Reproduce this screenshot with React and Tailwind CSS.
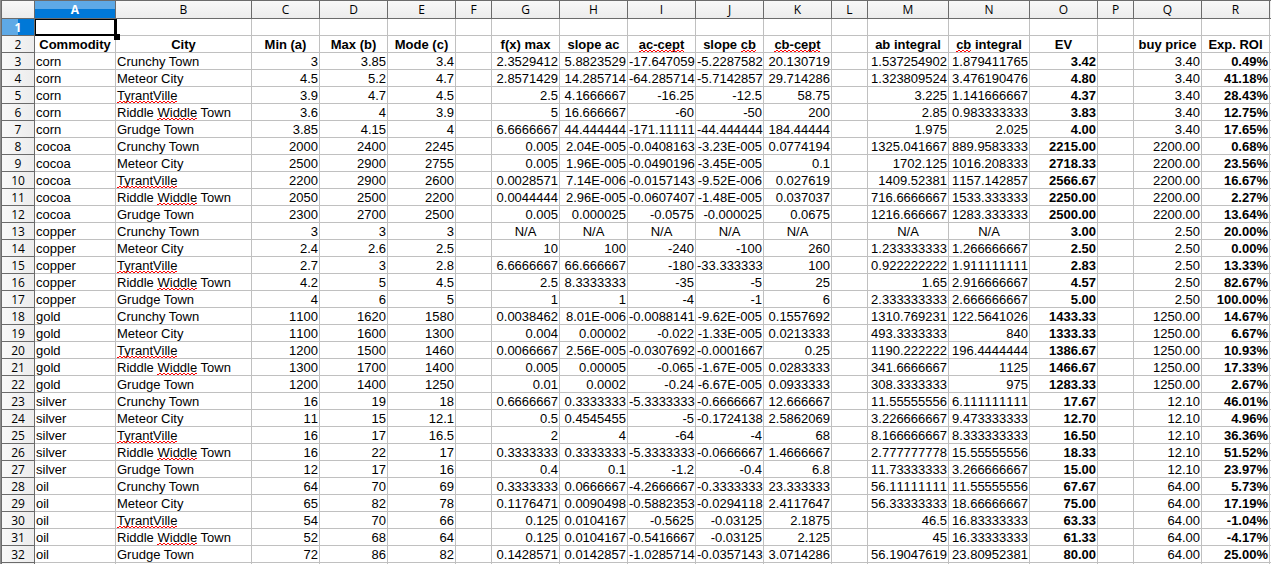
import React from 'react';
import clsx from 'clsx';

const COLUMNS = [
  { id: 'A', width: 'w-[81px]', title: 'Commodity', align: 'text-left' },
  { id: 'B', width: 'w-[136px]', title: 'City', align: 'text-left' },
  { id: 'C', width: 'w-[68px]', title: 'Min (a)' },
  { id: 'D', width: 'w-[68px]', title: 'Max (b)' },
  { id: 'E', width: 'w-[68px]', title: 'Mode (c)' },
  { id: 'F', width: 'w-[36px]', title: '' },
  { id: 'G', width: 'w-[68px]', title: 'f(x) max' },
  { id: 'H', width: 'w-[68px]', title: 'slope ac' },
  { id: 'I', width: 'w-[68px]', title: 'ac-cept' },
  { id: 'J', width: 'w-[68px]', title: 'slope cb' },
  { id: 'K', width: 'w-[68px]', title: 'cb-cept' },
  { id: 'L', width: 'w-[36px]', title: '' },
  { id: 'M', width: 'w-[81px]', title: 'ab integral' },
  { id: 'N', width: 'w-[81px]', title: 'cb integral' },
  { id: 'O', width: 'w-[68px]', title: 'EV', bold: true },
  { id: 'P', width: 'w-[36px]', title: '' },
  { id: 'Q', width: 'w-[68px]', title: 'buy price' },
  { id: 'R', width: 'w-[68px]', title: 'Exp. ROI', bold: true },
];

const CITIES = [
  'Crunchy Town',
  'Meteor City',
  'TyrantVille',
  'Riddle Widdle Town',
  'Grudge Town',
];

// Per commodity, one line per city:
// min max mode | f(x)max slope-ac ac-cept slope-cb cb-cept | ab cb | EV | ROI
const GOODS = [
  {
    name: 'corn',
    price: '3.40',
    lines: [
      '3 3.85 3.4 2.3529412 5.8823529 -17.647059 -5.2287582 20.130719 1.537254902 1.879411765 3.42 0.49%',
      '4.5 5.2 4.7 2.8571429 14.285714 -64.285714 -5.7142857 29.714286 1.323809524 3.476190476 4.80 41.18%',
      '3.9 4.7 4.5 2.5 4.1666667 -16.25 -12.5 58.75 3.225 1.141666667 4.37 28.43%',
      '3.6 4 3.9 5 16.666667 -60 -50 200 2.85 0.983333333 3.83 12.75%',
      '3.85 4.15 4 6.6666667 44.444444 -171.11111 -44.444444 184.44444 1.975 2.025 4.00 17.65%',
    ],
  },
  {
    name: 'cocoa',
    price: '2200.00',
    lines: [
      '2000 2400 2245 0.005 2.04E-005 -0.0408163 -3.23E-005 0.0774194 1325.041667 889.9583333 2215.00 0.68%',
      '2500 2900 2755 0.005 1.96E-005 -0.0490196 -3.45E-005 0.1 1702.125 1016.208333 2718.33 23.56%',
      '2200 2900 2600 0.0028571 7.14E-006 -0.0157143 -9.52E-006 0.027619 1409.52381 1157.142857 2566.67 16.67%',
      '2050 2500 2200 0.0044444 2.96E-005 -0.0607407 -1.48E-005 0.037037 716.6666667 1533.333333 2250.00 2.27%',
      '2300 2700 2500 0.005 0.000025 -0.0575 -0.000025 0.0675 1216.666667 1283.333333 2500.00 13.64%',
    ],
  },
  {
    name: 'copper',
    price: '2.50',
    lines: [
      '3 3 3 N/A N/A N/A N/A N/A N/A N/A 3.00 20.00%',
      '2.4 2.6 2.5 10 100 -240 -100 260 1.233333333 1.266666667 2.50 0.00%',
      '2.7 3 2.8 6.6666667 66.666667 -180 -33.333333 100 0.922222222 1.911111111 2.83 13.33%',
      '4.2 5 4.5 2.5 8.3333333 -35 -5 25 1.65 2.916666667 4.57 82.67%',
      '4 6 5 1 1 -4 -1 6 2.333333333 2.666666667 5.00 100.00%',
    ],
  },
  {
    name: 'gold',
    price: '1250.00',
    lines: [
      '1100 1620 1580 0.0038462 8.01E-006 -0.0088141 -9.62E-005 0.1557692 1310.769231 122.5641026 1433.33 14.67%',
      '1100 1600 1300 0.004 0.00002 -0.022 -1.33E-005 0.0213333 493.3333333 840 1333.33 6.67%',
      '1200 1500 1460 0.0066667 2.56E-005 -0.0307692 -0.0001667 0.25 1190.222222 196.4444444 1386.67 10.93%',
      '1300 1700 1400 0.005 0.00005 -0.065 -1.67E-005 0.0283333 341.6666667 1125 1466.67 17.33%',
      '1200 1400 1250 0.01 0.0002 -0.24 -6.67E-005 0.0933333 308.3333333 975 1283.33 2.67%',
    ],
  },
  {
    name: 'silver',
    price: '12.10',
    lines: [
      '16 19 18 0.6666667 0.3333333 -5.3333333 -0.6666667 12.666667 11.55555556 6.111111111 17.67 46.01%',
      '11 15 12.1 0.5 0.4545455 -5 -0.1724138 2.5862069 3.226666667 9.473333333 12.70 4.96%',
      '16 17 16.5 2 4 -64 -4 68 8.166666667 8.333333333 16.50 36.36%',
      '16 22 17 0.3333333 0.3333333 -5.3333333 -0.0666667 1.4666667 2.777777778 15.55555556 18.33 51.52%',
      '12 17 16 0.4 0.1 -1.2 -0.4 6.8 11.73333333 3.266666667 15.00 23.97%',
    ],
  },
  {
    name: 'oil',
    price: '64.00',
    lines: [
      '64 70 69 0.3333333 0.0666667 -4.2666667 -0.3333333 23.333333 56.11111111 11.55555556 67.67 5.73%',
      '65 82 78 0.1176471 0.0090498 -0.5882353 -0.0294118 2.4117647 56.33333333 18.66666667 75.00 17.19%',
      '54 70 66 0.125 0.0104167 -0.5625 -0.03125 2.1875 46.5 16.83333333 63.33 -1.04%',
      '52 68 64 0.125 0.0104167 -0.5416667 -0.03125 2.125 45 16.33333333 61.33 -4.17%',
      '72 86 82 0.1428571 0.0142857 -1.0285714 -0.0357143 3.0714286 56.19047619 23.80952381 80.00 25.00%',
    ],
  },
];

const ROWS = GOODS.flatMap(({ name, price, lines }) =>
  lines.map((line, i) => {
    const v = line.split(' ');
    return [
      name,
      CITIES[i],
      ...v.slice(0, 3),
      '',
      ...v.slice(3, 8),
      '',
      ...v.slice(8, 11),
      '',
      price,
      v[11],
    ];
  })
);

// words the spell checker does not know
const UNKNOWN = /(TyrantVille|Widdle|ac-cept|cb-cept|\bcb\b)/;

function Misspelled({ children }) {
  return (
    <span className="relative inline-block">
      {children}
      <svg
        className="absolute left-0 bottom-0 w-full h-[2px]"
        shapeRendering="crispEdges"
        aria-hidden="true"
      >
        <defs>
          <pattern
            id="squiggle"
            width="4"
            height="2"
            patternUnits="userSpaceOnUse"
          >
            <path d="M0 1h2v1h-2zM2 0h2v1h-2z" fill="#ff0000" />
          </pattern>
        </defs>
        <rect width="100%" height="2" fill="url(#squiggle)" />
      </svg>
    </span>
  );
}

function CellText({ text }) {
  return text
    .split(UNKNOWN)
    .map((part, i) =>
      i % 2 ? <Misspelled key={i}>{part}</Misspelled> : part
    );
}

function RowHeader({ number, active }) {
  return (
    <th
      scope="row"
      className={clsx(
        'p-0 pt-px border-x border-b border-[#6b6b6b] text-center text-xs leading-[15px] font-[Open_Sans,sans-serif]',
        active
          ? 'bg-linear-to-r from-[#5ea9e6] from-50% to-[#0078d7] to-50% text-white font-bold'
          : 'bg-linear-to-r from-[#f8f8f8] to-[#ececec] font-normal'
      )}
    >
      {number}
    </th>
  );
}

const CELL = 'p-0 pt-px border-r border-b border-[#c0c0c0]';

export default function App() {
  return (
    <div className="overflow-hidden border-l border-[#8c8c8c] bg-white text-black font-[Liberation_Sans,Arial,sans-serif]">
      <table className="w-full table-fixed border-separate border-spacing-0 text-[13px] leading-[15px] whitespace-nowrap">
        <colgroup>
          <col className="w-[34px]" />
          {COLUMNS.map((c) => (
            <col key={c.id} className={c.width} />
          ))}
          <col />
        </colgroup>
        <thead>
          <tr className="h-[19px]">
            <td className="p-0 border border-[#6b6b6b] bg-linear-to-b from-[#f8f8f8] to-[#ececec]" />
            {COLUMNS.map((c) => (
              <th
                key={c.id}
                scope="col"
                className={clsx(
                  'p-0 border-y border-r border-[#6b6b6b] text-center text-xs leading-4 font-[Open_Sans,sans-serif]',
                  c.id === 'A'
                    ? 'bg-linear-to-b from-[#5ea9e6] from-50% to-[#0078d7] to-50% text-white font-bold'
                    : 'bg-linear-to-b from-[#f8f8f8] to-[#ececec] font-normal'
                )}
              >
                {c.id}
              </th>
            ))}
            <td className="p-0 border-y border-[#6b6b6b] bg-[#f0f0f0]" />
          </tr>
        </thead>
        <tbody>
          {/* Row 1 is empty and holds the cell cursor */}
          <tr className="h-[17px]">
            <RowHeader number={1} active />
            {COLUMNS.map((c) => (
              <td key={c.id} className={clsx(CELL, 'relative')}>
                {c.id === 'A' && (
                  <>
                    <div className="absolute top-0 left-0 -right-0.5 -bottom-px z-10 border-t border-l border-r-[3px] border-b-2 border-black" />
                    <div className="absolute -right-[5px] -bottom-[5px] z-10 size-[6px] bg-black" />
                  </>
                )}
              </td>
            ))}
            <td className="p-0 border-b border-[#c0c0c0]" />
          </tr>

          {/* Titles */}
          <tr className="h-[17px]">
            <RowHeader number={2} />
            {COLUMNS.map((c) => (
              <td key={c.id} className={clsx(CELL, 'text-center font-bold')}>
                <CellText text={c.title} />
              </td>
            ))}
            <td className="p-0 border-b border-[#c0c0c0]" />
          </tr>

          {ROWS.map((row, r) => (
            <tr key={r} className="h-[17px]">
              <RowHeader number={r + 3} />
              {row.map((text, i) => {
                const { id, align, bold } = COLUMNS[i];
                return (
                  <td
                    key={id}
                    className={clsx(
                      CELL,
                      'px-px',
                      text === 'N/A' ? 'text-center' : align || 'text-right',
                      !align && '[font-kerning:none]',
                      bold && 'font-bold'
                    )}
                  >
                    <CellText text={text} />
                  </td>
                );
              })}
              <td className="p-0 border-b border-[#c0c0c0]" />
            </tr>
          ))}

          {/* Sliver of the next row */}
          <tr className="h-px">
            <td className="p-0 border-x border-[#6b6b6b] bg-[#f2f2f2]" />
            {COLUMNS.map((c) => (
              <td key={c.id} className="p-0 border-r border-[#c0c0c0]" />
            ))}
            <td className="p-0" />
          </tr>
        </tbody>
      </table>
    </div>
  );
}
